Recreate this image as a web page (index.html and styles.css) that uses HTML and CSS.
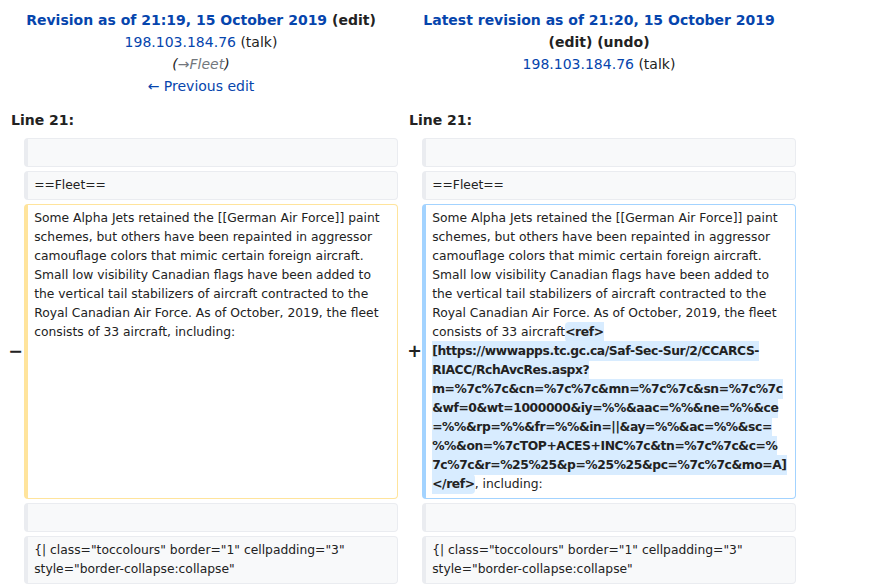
FILE: index.html
```html
<!DOCTYPE html>
<html>
<head>
<meta charset="utf-8">
<link rel="stylesheet" href="styles.css">
</head>
<body>
<table class="diff">
  <colgroup>
    <col class="col-marker">
    <col class="col-content">
    <col class="col-marker">
    <col class="col-content">
  </colgroup>
  <tr class="diff-title">
    <td colspan="2" class="title">
      <div><strong><a href="#">Revision as of 21:19, 15 October 2019</a> (edit)</strong></div>
      <div><a href="#">198.103.184.76</a> (talk)</div>
      <div class="comment">(<span class="auto">→Fleet</span>)</div>
      <div><a href="#">← Previous edit</a></div>
    </td>
    <td colspan="2" class="title">
      <div><strong><a href="#">Latest revision as of 21:20, 15 October 2019</a> (edit) (undo)</strong></div>
      <div><a href="#">198.103.184.76</a> (talk)</div>
    </td>
  </tr>
  <tr>
    <td colspan="2" class="lineno">Line 21:</td>
    <td colspan="2" class="lineno">Line 21:</td>
  </tr>
  <tr>
    <td class="marker"></td>
    <td class="line context"><div><br></div></td>
    <td class="marker"></td>
    <td class="line context"><div><br></div></td>
  </tr>
  <tr>
    <td class="marker"></td>
    <td class="line context"><div>==Fleet==</div></td>
    <td class="marker"></td>
    <td class="line context"><div>==Fleet==</div></td>
  </tr>
  <tr>
    <td class="marker"><span class="sign">−</span></td>
    <td class="line deleted"><div>Some Alpha Jets retained the [[German Air Force]] paint
schemes, but others have been repainted in aggressor
camouflage colors that mimic certain foreign aircraft.
Small low visibility Canadian flags have been added to
the vertical tail stabilizers of aircraft contracted to the
Royal Canadian Air Force. As of October, 2019, the fleet
consists of 33 aircraft, including:</div></td>
    <td class="marker"><span class="sign plus">+</span></td>
    <td class="line added"><div>Some Alpha Jets retained the [[German Air Force]] paint
schemes, but others have been repainted in aggressor
camouflage colors that mimic certain foreign aircraft.
Small low visibility Canadian flags have been added to
the vertical tail stabilizers of aircraft contracted to the
Royal Canadian Air Force. As of October, 2019, the fleet
consists of 33 aircraft<span class="change">&lt;ref&gt;
[https://wwwapps.tc.gc.ca/Saf-Sec-Sur/2/CCARCS-
RIACC/RchAvcRes.aspx?
m=%7c%7c&amp;cn=%7c%7c&amp;mn=%7c%7c&amp;sn=%7c%7c
&amp;wf=0&amp;wt=1000000&amp;iy=%%&amp;aac=%%&amp;ne=%%&amp;ce
=%%&amp;rp=%%&amp;fr=%%&amp;in=||&amp;ay=%%&amp;ac=%%&amp;sc=
%%&amp;on=%7cTOP+ACES+INC%7c&amp;tn=%7c%7c&amp;c=%
7c%7c&amp;r=%25%25&amp;p=%25%25&amp;pc=%7c%7c&amp;mo=A]
&lt;/ref&gt;</span>, including:</div></td>
  </tr>
  <tr>
    <td class="marker"></td>
    <td class="line context"><div><br></div></td>
    <td class="marker"></td>
    <td class="line context"><div><br></div></td>
  </tr>
  <tr>
    <td class="marker"></td>
    <td class="line context"><div>{| class="toccolours" border="1" cellpadding="3"
style="border-collapse:collapse"</div></td>
    <td class="marker"></td>
    <td class="line context"><div>{| class="toccolours" border="1" cellpadding="3"
style="border-collapse:collapse"</div></td>
  </tr>
</table>
</body>
</html>
```
FILE: styles.css
```css
html, body {
  margin: 0;
  padding: 0;
  background: #ffffff;
}
body {
  font-family: "DejaVu Sans", sans-serif;
  font-size: 14px;
  line-height: 1.54;
  color: #222222;
}
a {
  color: #0645ad;
  text-decoration: none;
}
table.diff {
  border-spacing: 4px;
  table-layout: fixed;
  width: 800px;
}
.col-marker { width: 16px; }
.col-content { width: 374px; }
table.diff td {
  padding: 0.33em 0.5em;
}
td.title {
  text-align: center;
  vertical-align: top;
  line-height: 22px;
}
.comment {
  font-style: italic;
}
.comment .auto {
  color: #72777d;
}
table.diff td.lineno {
  font-weight: bold;
  padding-bottom: 2.5px;
}
table.diff td.marker {
  padding: 0;
  text-align: right;
  font-weight: bold;
  font-size: 17.5px;
  line-height: 1.2;
  vertical-align: middle;
}
.sign {
  display: inline-block;
  margin-right: -3px;
}
.sign.plus {
  margin-right: -4px;
}
table.diff td.line {
  font-size: 12.32px;
  line-height: 19px;
  padding: 4px 0.5em;
  vertical-align: top;
  border-style: solid;
  border-width: 1px 1px 1px 4px;
  border-radius: 0.33em;
}
td.line div {
  white-space: pre;
}
td.context {
  background: #f8f9fa;
  border-color: #eaecf0;
}
td.deleted {
  background: #ffffff;
  border-color: #ffe49c;
}
td.added {
  background: #ffffff;
  border-color: #a3d3ff;
}
.change {
  font-weight: bold;
  letter-spacing: -0.4px;
  background: #d8ecff;
  border-radius: 0.33em;
  padding: 0.25em 0;
}
```
